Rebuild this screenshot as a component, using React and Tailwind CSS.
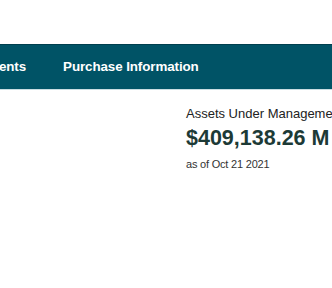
import React from 'react';

const navItems = ['Investments', 'Purchase Information'];

const App = () => {
  return (
    <div className="w-[332px] h-[288px] overflow-hidden bg-white" style={{ fontFamily: '"Liberation Sans", Arial, sans-serif' }}>
      <div className="h-[44px]" />
      <nav className="h-[46px] bg-[#005366] border-t border-[#003f4e] border-b border-b-[#c9dde2] flex items-center whitespace-nowrap overflow-hidden">
        <ul className="flex items-center gap-[37px] -ml-[51px]">
          {navItems.map((item) => (
            <li key={item} className="text-[13.4px] font-bold text-white tracking-[-0.1px]">
              {item}
            </li>
          ))}
        </ul>
      </nav>
      <div className="pl-[186px] pt-[16px] whitespace-nowrap text-[#1d3a36]">
        <p className="text-[13px] leading-[16px] text-[#222]">Assets Under Management</p>
        <p className="mt-[4px] text-[21.5px] leading-[25px] font-bold">$409,138.26 M</p>
        <p className="mt-[6px] text-[11px] leading-[14px] text-[#333] tracking-[-0.2px]">as of Oct 21 2021</p>
      </div>
    </div>
  );
};

export default App;
